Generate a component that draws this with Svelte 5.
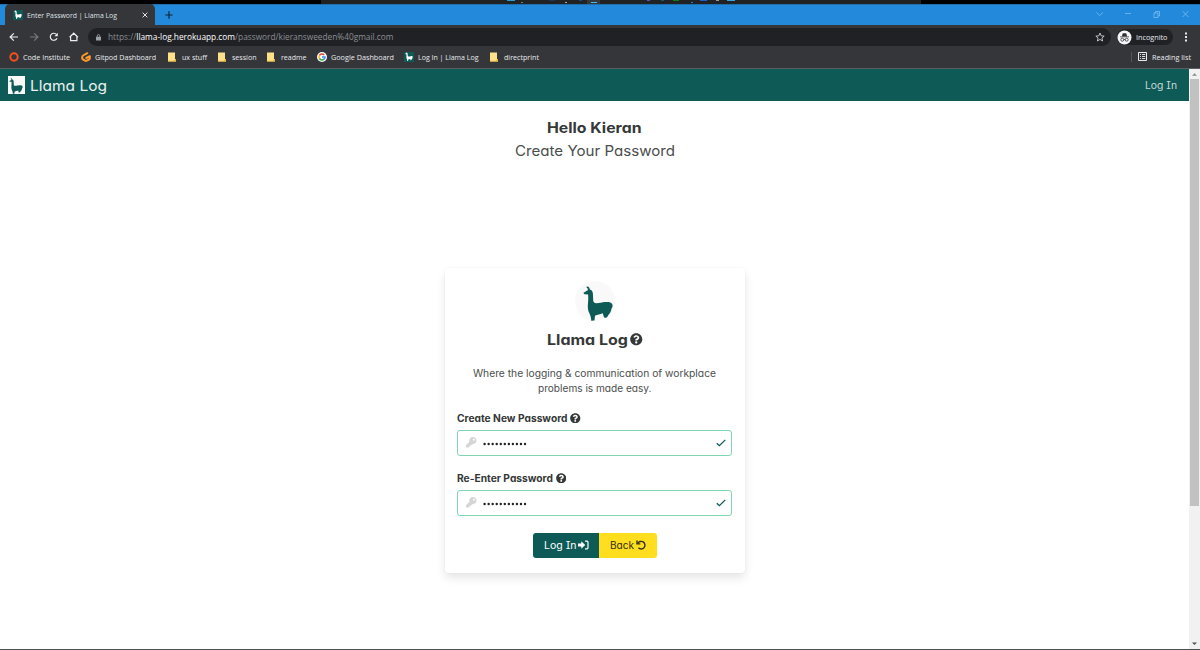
<script>
  const bookmarks = [
    { icon: 'ring', text: 'Code Institute', text_w: 47, slot: 72 },
    { icon: 'gitpod', text: 'Gitpod Dashboard', text_w: 61, slot: 86.5 },
    { icon: 'folder', text: 'ux stuff', text_w: 25, slot: 50 },
    { icon: 'folder', text: 'session', text_w: 24.5, slot: 49.5 },
    { icon: 'folder', text: 'readme', text_w: 25.5, slot: 49.5 },
    { icon: 'google', text: 'Google Dashboard', text_w: 63, slot: 87.5 },
    { icon: 'llama', text: 'Log In | Llama Log', text_w: 60.5, slot: 86 },
    { icon: 'folder', text: 'directprint', text_w: 35, slot: 60 }
  ];

  const fields = [
    { label: 'Create New Password', width: 110.5 },
    { label: 'Re-Enter Password', width: 96 }
  ];

  const marks = [
    [507, 8, '#2a9bd0'], [521, 2, '#777'], [549, 6, '#1d3557'], [565, 2, '#aaa'],
    [579, 3, '#174a7a'], [591, 6, '#49b8ec'], [647, 3, '#5b4fc4'], [661, 3, '#105a70'],
    [673, 6, '#107c10'], [691, 2, '#1584c4'], [700, 7, '#1c5fc7'], [716, 3, '#999'], [727, 8, '#36a4d8']
  ];

  // Stretches a line of text to a given width, glyphs included.
  function fit(node, width) {
    const natural = node.getBoundingClientRect().width;
    node.style.width = width + 'px';
    node.style.transform = `scaleX(${width / natural})`;
  }
</script>

{#snippet llama(cls)}
  <svg class={cls} viewBox="0 0 30 35">
    <path d="M3.6.7 C5.3.2 6.600 1.600 6.800 3.400 C8.800 3.900 9.800 5.500 9.900 7.500 L10.200 14.500 C10.500 16.600 11.600 17.300 13.600 17.200 C17 17.200 18.500 16.400 22 16.100 C25.500 15.700 28 16.200 29 17.700 C30 19.200 29.800 21 28.600 22.200 C28.200 25 27 27.400 25.200 29.200 C24.400 31 23.300 31.900 21.900 31.800 C20.400 31.600 20.700 29.400 19.700 27.200 C17 28.600 14.500 28.200 12.300 29.600 C11.500 31 11.900 33 11.400 34.600 L8.300 34.700 C7.900 32 7.600 29.800 6.500 27.600 C5 25 4.600 21.600 4.900 18 C5.400 14 5.300 11 5.100 8.400 L1.700 8.300 C.700 7.900.500 7.200.600 6.700 C2 5.700 3.300 5.300 4.700 4.300 C5.100 2.900 4.700 2 3.600 1.700 Z" fill="currentColor" />
  </svg>
{/snippet}

{#snippet question()}
  <svg class="q" viewBox="0 0 512 512"><path fill="currentColor" d="M504 256c0 137-111 248-248 248S8 393 8 256 119 8 256 8s248 111 248 248zM262.700 90c-54.500 0-89.300 23-116.500 63.800-3.600 5.300-2.400 12.400 2.700 16.300l34.700 26.300c5.200 3.900 12.600 3 16.700-2.100 17.800-22.600 30.100-35.800 57.300-35.800 20.400 0 45.700 13.200 45.700 33 0 15-12.400 22.700-32.500 34C247.100 238.500 216 254.900 216 296v4c0 6.600 5.400 12 12 12h56c6.600 0 12-5.400 12-12v-1.300c0-28.500 83.200-29.600 83.200-106.700 0-58-60.200-102-116.500-102zM256 338c-25.400 0-46 20.600-46 46s20.600 46 46 46 46-20.600 46-46-20.600-46-46-46z" /></svg>
{/snippet}

<div class="window">
  <div class="desktop">
    <svg width="1200" height="4">
      <rect x="321" width="600" height="4" fill="#202224" />
      <rect x="587" width="13" height="4" fill="#34383b" />
      {#each marks as [x, w, c]}
        <rect {x} y={w === 2 || x === 591 ? 2 : 0} width={w} height="1" fill={c} />
      {/each}
    </svg>
  </div>

  <div class="tabstrip">
    <div class="tab">
      <span class="fav">{@render llama('mini')}</span>
      <span class="tabtitle"><span class="t" use:fit={90}>Enter Password | Llama Log</span></span>
      <svg class="close" viewBox="0 0 6 6"><path d="M.6.6 5.400 5.400M5.400.6.6 5.400" stroke="#dfe1e5" stroke-width="1" /></svg>
    </div>
    <svg class="plus" viewBox="0 0 8 8"><path d="M4 .3V7.700M.3 4H7.700" stroke="#10273d" stroke-width="1.200" /></svg>
    <svg class="winctl" width="100" height="12" viewBox="0 0 100 12" fill="none" stroke="#79bdf0" stroke-width=".8">
      <path d="M1.500 3.500 4.700 6.500 7.900 3.500M30 4.500h6M87.500 2l6 6M93.500 2l-6 6" />
      <path d="M59 4h4v4.500h-4zM60.500 4V2.500h4V7H63" />
    </svg>
  </div>

  <div class="toolbar">
    <svg class="nav" width="80" height="18" viewBox="0 0 80 18" fill="none" stroke="#eceef0" stroke-width="1.200">
      <path d="M18 9H10.300M13.800 5.300 10.100 9l3.700 3.700" />
      <path d="M30 9h7.700M34.200 5.300 37.900 9l-3.700 3.700" stroke="#77797d" />
      <path d="M57 10.200A3.500 3.500 0 1 1 56.600 6.600" />
      <path d="M57.800 4.800v3.400h-3.400z" fill="#eceef0" stroke="none" />
      <path d="M70.600 8.700V12.700H76.900V8.700M69.600 9.300 73.750 5.200 77.900 9.300" />
    </svg>
    <div class="omnibox">
      <svg class="lock" viewBox="0 0 6 8"><path d="M0 3h1V2a2 2 0 0 1 4 0v1h1v4.500H0zM1.900 3h2.200V2a1.100 1.100 0 0 0-2.200 0z" fill="#9aa0a6" /></svg>
      <span class="url"><span class="t" use:fit={285.500}>https://<b>llama-log.herokuapp.com</b>/password/kieransweeden%40gmail.com</span></span>
      <svg class="star" viewBox="0 0 24 24"><path d="M12 2.500l2.900 6.700 7.100.6-5.400 4.700 1.700 7.100L12 17.800l-6.300 3.800 1.700-7.100L2 9.800l7.100-.6z" fill="none" stroke="#dadce0" stroke-width="2" /></svg>
    </div>
    <div class="incog">
      <svg width="15" height="15" viewBox="0 0 15 15">
        <circle cx="7.500" cy="7.500" r="7" fill="#f5f6f7" />
        <path d="M5 6.200 5.600 3.500Q6 2.900 7.500 3.300 9 2.900 9.400 3.500L10 6.200zM3 6.500h9v.8H3z" fill="#303134" />
        <g fill="none" stroke="#303134" stroke-width=".8"><circle cx="5.300" cy="9.700" r="1.500" /><circle cx="9.700" cy="9.700" r="1.500" /><path d="M6.800 9.500h1.400" /></g>
      </svg>
      <span class="t" use:fit={31.500}>Incognito</span>
    </div>
    <svg class="dots" viewBox="0 0 2 10"><path d="M0 .5h2v2H0zM0 4h2v2H0zM0 7.500h2v2H0z" fill="#e8eaed" /></svg>
  </div>

  <div class="bookmarks">
    {#each bookmarks as b}
      <div class="bm" style="width:{b.slot}px">
        <span class="slot">
          {#if b.icon === 'ring'}
            <svg width="10" height="10" viewBox="0 0 10 10"><circle cx="5" cy="5" r="3.700" fill="none" stroke="#f4511e" stroke-width="2" /></svg>
          {:else if b.icon === 'gitpod'}
            <svg width="10" height="10" viewBox="0 0 10 10"><path d="M6.300 1.200 2.200 3.500Q1.200 4.100 1.200 5v1.200q0 .8.800 1.300l2.200 1.200q.8.400 1.600 0l2.200-1.200q.8-.5.800-1.300V4.200L5.300 6" fill="none" stroke="#ff9a2e" stroke-width="2" stroke-linejoin="round" stroke-linecap="round" /></svg>
          {:else if b.icon === 'folder'}
            <svg width="8" height="10" viewBox="0 0 8 10"><path d="M0 .5h7v6.500h1V9.500H0z" fill="#ffe08a" /><path d="M7 7h1v2.500H5.800zM0 8.800h8v.7H0z" fill="#e8b730" /></svg>
          {:else if b.icon === 'google'}
            <svg width="10" height="10" viewBox="0 0 10 10"><circle cx="5" cy="5" r="5" fill="#fff" /><g fill="none" stroke-width="1.500"><path d="M2.400 3.500A3 3 0 0 1 7.200 3" stroke="#ea4335" /><path d="M2.400 6.500a3 3 0 0 1 0-3" stroke="#fbbc05" /><path d="M7.100 7.100a3 3 0 0 1-4.700-.6" stroke="#34a853" /><path d="M5 5h3a3 3 0 0 1-.9 2.100" stroke="#4285f4" /></g></svg>
          {:else}
            <span class="fav">{@render llama('mini')}</span>
          {/if}
        </span>
        <span class="t" use:fit={b.text_w}>{b.text}</span>
      </div>
    {/each}
    <div class="reading">
      <svg width="9" height="9" viewBox="0 0 9 9"><path d="M.5.500h8v8h-8z" fill="none" stroke="#e8eaed" /><path d="M2 2.500h1M4 2.500h3.200M2 4.500h1M4 4.500h3.200M2 6.500h1M4 6.500h3.200" stroke="#e8eaed" stroke-width=".9" /></svg>
      <span class="t" use:fit={39}>Reading list</span>
    </div>
  </div>

  <div class="viewport">
    <div class="page">
      <header>
        <span class="brandicon">{@render llama('brandllama')}</span>
        <span class="brand t" use:fit={77}>Llama Log</span>
        <span class="login t" use:fit={32}>Log In</span>
      </header>
      <div class="intro">
        <h1><span class="t" use:fit={94.500}>Hello Kieran</span></h1>
        <p><span class="t" use:fit={160}>Create Your Password</span></p>
      </div>
      <main class="card">
        <div class="logo">{@render llama('big')}</div>
        <h2><span class="t" use:fit={81}>Llama Log</span>{@render question()}</h2>
        <div class="blurb">
          <div><span class="t" use:fit={243}>Where the logging &amp; communication of workplace</span></div>
          <div><span class="t" use:fit={113.500}>problems is made easy.</span></div>
        </div>
        {#each fields as f}
          <div class="field">
            <div class="label"><span class="t" use:fit={f.width}>{f.label}</span>{@render question()}</div>
            <div class="input">
              <svg class="key" viewBox="0 0 512 512"><path fill="#d5d5d5" d="M512 176c0 97.200-78.800 176-176 176-11.200 0-22.200-1.100-32.800-3.100l-24 27A24 24 0 0 1 261.200 384H224v40c0 13.300-10.700 24-24 24h-40v40c0 13.300-10.700 24-24 24H24c-13.300 0-24-10.700-24-24v-78.100c0-6.400 2.500-12.500 7-17l161.800-161.800C163 213.800 160 195.200 160 176 160 78.800 238.800 0 336 0s176 78.500 176 176zM336 128c0 26.500 21.500 48 48 48s48-21.500 48-48-21.500-48-48-48-48 21.500-48 48z" /></svg>
              <svg class="pw" width="46" height="4" viewBox="0 0 46 4">{#each Array(11) as _, i}<circle cx={1.6 + i * 4.04} cy="2" r="1.2" fill="#202322" />{/each}</svg>
              <svg class="check" viewBox="0 0 10 8"><path d="M.8 4.200 3.400 6.700 9.300.9" fill="none" stroke="#0e5a57" stroke-width="1.300" /></svg>
            </div>
          </div>
        {/each}
        <div class="actions">
          <div class="btn go"><span class="t" use:fit={32.500}>Log In</span>
            <svg width="11" height="10" viewBox="0 0 11 10"><path d="M0 3.500h3.300V1.300L7.200 5 3.300 8.700V6.500H0z" fill="#fff" /><path d="M7 1.200h2q1 0 1 1v5.600q0 1-1 1H7" fill="none" stroke="#fff" stroke-width="1.200" /></svg>
          </div>
          <div class="btn back"><span class="t" use:fit={24}>Back</span>
            <svg width="10" height="10" viewBox="0 0 10 10"><path d="M1.700 3.600A3.800 3.800 0 1 1 2.400 7.800" fill="none" stroke="#33301c" stroke-width="1.400" /><path d="M.3.500v4h4V3.200H1.700V.5z" fill="#33301c" /></svg>
          </div>
        </div>
      </main>
    </div>
    <div class="scroll">
      <svg width="11" height="10" viewBox="0 0 11 10"><path d="M3 6.700h5L5.500 4.200z" fill="#8b8b8b" /></svg>
      <div class="thumb"></div>
      <svg class="down" width="11" height="10" viewBox="0 0 11 10"><path d="M3 3.500h5L5.500 6z" fill="#505050" /></svg>
    </div>
  </div>
</div>

<style>
  :global(body) { margin: 0; overflow: hidden; }
  .window { width: 1200px; height: 650px; display: flex; flex-direction: column; background: #fff; font-family: "Open Sans", "Noto Sans", sans-serif; font-size: 7.5px; color: #e8eaed; }
  svg { display: block; flex: none; }
  .t { display: inline-block; flex: none; white-space: pre; text-align: left; transform-origin: 0 50%; }
  .desktop { height: 4px; background: #000; }
  .tabstrip { height: 21px; display: flex; align-items: center; background: #2389db; box-shadow: inset 0 1px #206fac; }
  .tab { box-sizing: border-box; width: 150px; height: 21px; margin-left: 5px; padding: 0 7px 0 8px; display: flex; align-items: center; background: #35363a; border-radius: 5px 5px 0 0; color: #dfe1e5; }
  .tabtitle { flex: 1; padding-left: 4px; }
  .close { width: 6px; height: 6px; }
  .plus { width: 8px; height: 8px; margin-left: 10px; }
  .winctl { margin-left: auto; margin-right: 5px; }
  .fav { width: 10px; height: 10px; display: flex; align-items: center; justify-content: center; background: #0e5a57; color: #fff; }
  .fav :global(.mini) { width: 8px; height: 9px; }
  .toolbar { height: 24px; display: flex; align-items: center; background: #35363a; }
  .omnibox { box-sizing: border-box; width: 1023px; height: 18px; margin-left: 8px; padding: 0 6px 0 8px; display: flex; align-items: center; background: #202124; border-radius: 9px; }
  .lock { width: 5px; height: 7px; }
  .url { flex: 1; padding-left: 7px; font-size: 8.7px; color: #8b8f94; }
  .url b { font-weight: 400; color: #fff; }
  .star { width: 10px; height: 10px; }
  .incog { height: 16px; width: 56px; margin-left: 6px; display: flex; align-items: center; gap: 4px; background: #202124; border-radius: 8px; }
  .dots { width: 2px; height: 10px; margin-left: 12px; }
  .bookmarks { box-sizing: border-box; height: 20px; padding: 0 9px 4px; display: flex; align-items: center; background: #35363a; border-bottom: 1px solid #5c5e61; }
  .bm { display: flex; align-items: center; flex: none; }
  .slot { width: 14px; flex: none; }
  .reading { margin-left: auto; display: flex; align-items: center; gap: 5px; padding-left: 6px; border-left: 1px solid #54565a; }
  .viewport { flex: 1; display: flex; border-bottom: 1px solid #4d4f52; }
  .page { flex: 1; font-family: Inter, sans-serif; font-feature-settings: "cv11" 1, "cv08" 1; color: #343837; }
  header { height: 32px; display: flex; align-items: center; padding: 0 12px 0 7.5px; background: #0e5a57; color: #eaf1f0; }
  .brandicon { width: 17.5px; height: 18px; display: flex; align-items: center; justify-content: center; background: #f8fafa; color: #0e5a57; }
  .brandicon :global(.brandllama) { width: 14px; height: 16px; margin-top: 1px; }
  .brand { padding-top: 1px; margin-left: 5px; font-size: 14.5px; line-height: 20px; }
  .login { margin-left: auto; font-size: 10px; color: #c6d8d6; }
  .intro { height: 166.5px; padding-top: 15px; box-sizing: border-box; text-align: center; }
  h1, h2, p { margin: 0; }
  h1 { font-size: 14.5px; line-height: 24px; font-weight: 700; }
  p { font-size: 14.5px; line-height: 22px; color: #4b4e4d; }
  .card { box-sizing: border-box; width: 300px; height: 305.5px; margin: 0 auto; padding: 13.5px 12.5px; border-radius: 4px; box-shadow: 0 5px 10px rgba(0,0,0,.1), 0 0 2px rgba(0,0,0,.05); }
  .logo { width: 40px; height: 40px; margin: 0 auto; border-radius: 50%; background: #f9f9f9; }
  .logo :global(.big) { width: 30px; height: 35px; margin-left: 8px; padding-top: 5px; color: #0e5a57; }
  h2 { display: flex; align-items: center; justify-content: center; gap: 2.5px; height: 20px; margin-top: 8.5px; padding-left: .5px; font-size: 14.5px; font-weight: 700; }
  h2 :global(.q) { width: 12.5px; height: 12.5px; }
  .blurb { margin-top: 16px; font-size: 9.8px; line-height: 15px; text-align: center; color: #4b4e4d; }
  .blurb div { height: 15px; }
  .field { height: 60px; }
  .blurb + .field { margin-top: 15px; }
  .label { height: 15px; display: flex; align-items: center; gap: 2.5px; font-size: 9.7px; font-weight: 700; }
  .label :global(.q) { width: 10.5px; height: 10.5px; }
  .input { box-sizing: border-box; height: 26px; margin-top: 4px; padding: 0 5px 0 8px; display: flex; align-items: center; border: 1px solid #7fd6b2; border-radius: 3px; }
  .key { width: 10.5px; height: 10.5px; }
  .pw { margin: 2px 0 0 6.5px; }
  .check { width: 10px; height: 8px; margin-left: auto; }
  .actions { display: flex; justify-content: center; margin-top: 2px; font-size: 9.8px; }
  .btn { box-sizing: border-box; height: 25px; display: flex; align-items: center; gap: 2px; padding-left: 11px; }
  .go { width: 66px; color: #fff; background: #0e5a57; border-radius: 3px 0 0 3px; }
  .back { width: 58px; gap: 2.5px; color: #33301c; background: #ffdd1f; border-radius: 0 3px 3px 0; }
  .scroll { width: 11px; display: flex; flex-direction: column; background: #f1f1f1; }
  .thumb { height: 427px; margin: 0 1px; background: #c1c1c1; }
  .down { margin-top: auto; }
</style>
